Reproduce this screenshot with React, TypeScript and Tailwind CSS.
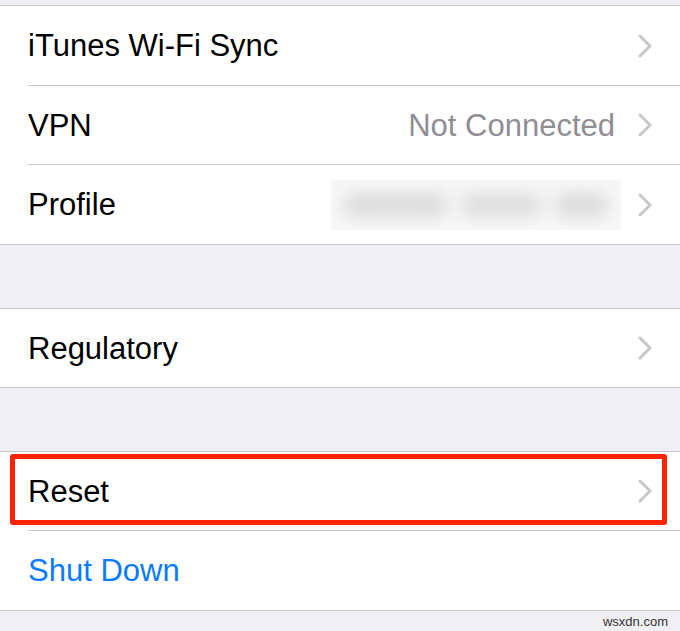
import type { ReactNode } from "react";

function Chevron() {
  return (
    <svg width="14" height="24" viewBox="0 0 14 24" className="shrink-0">
      <path
        d="M2 2 L12 12 L2 22"
        fill="none"
        stroke="#c7c7cc"
        strokeWidth="3"
        strokeLinecap="round"
        strokeLinejoin="round"
      />
    </svg>
  );
}

interface RowProps {
  label: string;
  height: string;
  blue?: boolean;
  chevron?: boolean;
  last?: boolean;
  value?: ReactNode;
  children?: ReactNode;
}

function Row({ label, height, blue, chevron = true, last, value, children }: RowProps) {
  return (
    <div className={`relative pl-[28px] ${height}`}>
      <div
        className={`flex h-full items-center pr-[28px] ${
          last ? "" : "border-b border-[#c8c7cc]"
        }`}
      >
        <span
          className={`flex-1 text-[31px] leading-none ${
            blue ? "text-[#0a7aff]" : "text-black"
          }`}
        >
          {label}
        </span>
        {value}
        {chevron && <Chevron />}
      </div>
      {children}
    </div>
  );
}

function Group({ children }: { children: ReactNode }) {
  return <div className="border-y border-[#c8c7cc] bg-white">{children}</div>;
}

function BlurredValue() {
  // the profile name is blurred out in the screenshot
  return (
    <div className="mr-[17px] flex h-[50px] w-[290px] items-center gap-[12px] overflow-hidden bg-[#f7f7f7] px-[12px]">
      <span className="h-[24px] w-[108px] rounded-full bg-[#dcdcdc] blur-[8px]" />
      <span className="h-[24px] w-[84px] rounded-full bg-[#dedede] blur-[8px]" />
      <span className="h-[24px] w-[56px] rounded-full bg-[#dcdcdc] blur-[8px]" />
    </div>
  );
}

export default function App() {
  return (
    <div
      className="flex h-[631px] w-[680px] flex-col overflow-hidden bg-[#efeff4]"
      style={{ fontFamily: '"Liberation Sans", Arial, sans-serif' }}
    >
      <div className="h-[5px] shrink-0" />
      <Group>
        <Row label="iTunes Wi-Fi Sync" height="h-[80px]" />
        <Row
          label="VPN"
          height="h-[79px]"
          value={
            <span className="mr-[23px] text-[31px] leading-none text-[#8e8e93]">
              Not Connected
            </span>
          }
        />
        <Row label="Profile" height="h-[79px]" last value={<BlurredValue />} />
      </Group>

      <div className="h-[63px] shrink-0" />
      <Group>
        <Row label="Regulatory" height="h-[78px]" last />
      </Group>

      <div className="h-[63px] shrink-0" />
      <Group>
        <Row label="Reset" height="h-[79px]">
          <div className="absolute top-[2px] right-[13px] bottom-[6px] left-[10px] rounded-[3px] border-[5px] border-[#ff2200]" />
        </Row>
        <Row label="Shut Down" height="h-[79px]" blue chevron={false} last />
      </Group>

      <div className="flex flex-1 items-center justify-end pr-[12px] pt-[1px]">
        <span className="text-[13px] leading-none text-[#333]">wsxdn.com</span>
      </div>
    </div>
  );
}
